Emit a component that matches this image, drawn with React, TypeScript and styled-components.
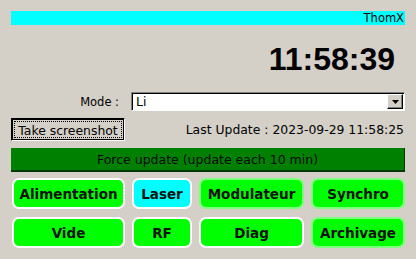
import React from 'react';
import styled, { createGlobalStyle } from 'styled-components';

const GlobalStyle = createGlobalStyle`
  html, body {
    margin: 0;
    padding: 0;
    background: #d4d0c8;
  }
  body {
    font-family: 'DejaVu Sans', sans-serif;
    color: #000;
  }
`;

const Page = styled.div`
  width: 416px;
  height: 259px;
  box-sizing: border-box;
  padding: 11px 11px 0 11px;
  display: flex;
  flex-direction: column;
  background: #d4d0c8;
`;

const TitleBar = styled.div`
  height: 14px;
  background: #00ffff;
  text-align: right;
  font-size: 11.5px;
  line-height: 14px;
  padding-right: 1px;
`;

const Clock = styled.div`
  margin-top: 16px;
  height: 37px;
  padding-right: 10px;
  text-align: right;
  font-family: 'Liberation Sans', Arial, sans-serif;
  font-weight: bold;
  font-size: 32px;
  line-height: 37px;
`;

const ModeRow = styled.div`
  margin-top: 14px;
  height: 19px;
  display: flex;
  justify-content: flex-end;
  align-items: center;
`;

const ModeLabel = styled.span`
  font-size: 11.5px;
  margin-right: 12px;
`;

const Combo = styled.div`
  width: 274px;
  height: 19px;
  box-sizing: border-box;
  background: #fff;
  border-top: 1px solid #808080;
  border-left: 1px solid #808080;
  border-right: 1px solid #fff;
  border-bottom: 1px solid #fff;
  box-shadow: inset 1px 1px 0 #000;
  display: flex;
  align-items: center;
  font-size: 12.4px;
  padding-left: 4px;
`;

const ComboText = styled.span`
  flex: 1;
`;

const ArrowButton = styled.span`
  width: 16px;
  height: 15px;
  margin-right: 1px;
  box-sizing: border-box;
  background: #d4d0c8;
  border-top: 1px solid #fff;
  border-left: 1px solid #fff;
  border-right: 1px solid #000;
  border-bottom: 1px solid #000;
  box-shadow: inset -1px -1px 0 #808080;
  display: flex;
  align-items: center;
  justify-content: center;
`;

const ActionRow = styled.div`
  margin-top: 7px;
  height: 23px;
  display: flex;
  justify-content: space-between;
  align-items: center;
`;

const ShotButton = styled.button`
  width: 114px;
  height: 23px;
  box-sizing: border-box;
  padding: 0;
  background: #d4d0c8;
  border-style: solid;
  border-width: 1px;
  border-color: #000 #fff #fff #000;
  box-shadow: inset 1px 1px 0 #000, inset -1px -1px 0 #000;
  font-family: 'DejaVu Sans', sans-serif;
  font-size: 12.4px;
  color: #000;
  display: flex;
  align-items: center;
  justify-content: center;
`;

const FocusRing = styled.span`
  display: block;
  margin: 2px;
  width: calc(100% - 4px);
  height: calc(100% - 4px);
  box-sizing: border-box;
  border: 1px dotted #000;
  line-height: 17px;
  text-align: center;
`;

const LastUpdate = styled.span`
  font-size: 12.4px;
  padding-right: 1px;
`;

const ForceBar = styled.div`
  margin-top: 7px;
  height: 24px;
  box-sizing: border-box;
  background: #008000;
  border-bottom: 2px solid #003a00;
  border-right: 1px solid #003a00;
  text-align: center;
  font-size: 12.5px;
  line-height: 23px;
  color: #0a0a0a;
`;

const Grid = styled.div`
  margin-top: 6px;
  padding-left: 1px;
  display: grid;
  grid-template-columns: 113px 60px 105px 94px;
  grid-auto-rows: 31px;
  column-gap: 7px;
  row-gap: 8px;
`;

const NavButton = styled.button<{ $color: string; $ring: string }>`
  box-sizing: border-box;
  padding: 0;
  background: ${(p) => p.$color};
  border: 2px solid ${(p) => p.$ring};
  border-radius: 7px;
  font-family: 'DejaVu Sans', sans-serif;
  font-weight: bold;
  font-size: 13.5px;
  color: #111;
  text-align: center;
`;

const buttons = [
  { label: 'Alimentation', color: '#00ff00', ring: '#ffffff' },
  { label: 'Laser', color: '#00ffff', ring: '#ffffff' },
  { label: 'Modulateur', color: '#00ff00', ring: '#7dff7d' },
  { label: 'Synchro', color: '#00ff00', ring: '#7dff7d' },
  { label: 'Vide', color: '#00ff00', ring: '#ffffff' },
  { label: 'RF', color: '#00ff00', ring: '#ffffff' },
  { label: 'Diag', color: '#00ff00', ring: '#ffffff' },
  { label: 'Archivage', color: '#00ff00', ring: '#7dff7d' },
];

const App = () => (
  <>
    <GlobalStyle />
    <Page>
      <TitleBar>ThomX</TitleBar>
      <Clock>11:58:39</Clock>
      <ModeRow>
        <ModeLabel>Mode :</ModeLabel>
        <Combo>
          <ComboText>Li</ComboText>
          <ArrowButton>
            <svg width="7" height="4" viewBox="0 0 7 4">
              <polygon points="0,0 7,0 3.5,4" fill="#000" />
            </svg>
          </ArrowButton>
        </Combo>
      </ModeRow>
      <ActionRow>
        <ShotButton>
          <FocusRing>Take screenshot</FocusRing>
        </ShotButton>
        <LastUpdate>Last Update : 2023-09-29 11:58:25</LastUpdate>
      </ActionRow>
      <ForceBar>Force update (update each 10 min)</ForceBar>
      <Grid>
        {buttons.map((b) => (
          <NavButton key={b.label} $color={b.color} $ring={b.ring}>
            {b.label}
          </NavButton>
        ))}
      </Grid>
    </Page>
  </>
);

export default App;
